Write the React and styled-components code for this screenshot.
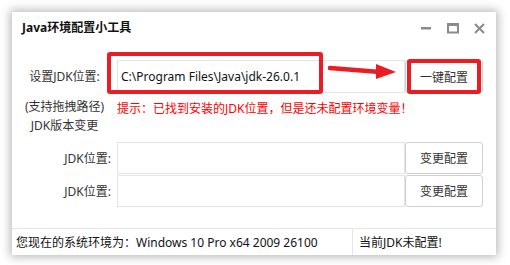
import React from "react";
import styled, { createGlobalStyle } from "styled-components";

const Global = createGlobalStyle`
  html, body { margin: 0; padding: 0; background: #ffffff; }
  body { font-family: "Noto Sans", "Noto Sans CJK SC", sans-serif; font-size: 12px; color: #333; }
  * { box-sizing: border-box; }
`;

const Page = styled.div`
  padding: 12px;
  width: 510px;
  height: 265px;
`;

const Window = styled.div`
  position: relative;
  width: 484px;
  height: 243px;
  background: #fff;
  box-shadow: 0 0 9px 2px rgba(0, 0, 0, 0.28);
  display: flex;
  flex-direction: column;
`;

const TitleBar = styled.div`
  height: 30px;
  display: flex;
  align-items: center;
  justify-content: space-between;
  padding: 0 11px 0 10px;
`;

const Title = styled.div`
  font-weight: bold;
  font-size: 12px;
  color: #111;
`;

const Controls = styled.div`
  display: flex;
  align-items: center;
  gap: 15px;
  padding-top: 2px;
`;

const Content = styled.div`
  flex: 1;
  padding-top: 18px;
  display: flex;
  flex-direction: column;
`;

const MainRow = styled.div`
  display: grid;
  grid-template-columns: 105px 288px 78px;
  height: 33px;
  align-items: stretch;
`;

const SideLabel = styled.div`
  text-align: center;
  line-height: ${(p) => p.$lh || 22}px;
  align-self: center;
  color: #333;
  white-space: nowrap;
`;

const Input = styled.div`
  border: 1px solid #e4e4e4;
  background: #fff;
  display: flex;
  align-items: center;
  padding-left: 3px;
  color: #111;
  white-space: nowrap;
`;

const Button = styled.div`
  border: 1px solid #cfcfcf;
  border-radius: 3px;
  background: #fff;
  display: flex;
  align-items: center;
  justify-content: center;
  color: #333;
`;

const InfoRow = styled.div`
  display: grid;
  grid-template-columns: 105px 1fr;
  height: 22px;
`;

const Hint = styled.div`
  color: #ff0000;
  padding-top: 5px;
  padding-left: 0;
  line-height: 22px;
  white-space: nowrap;
`;

const Rows = styled.div`
  margin-top: 5px;
  display: flex;
  flex-direction: column;
  gap: 1px;
`;

const JdkRow = styled.div`
  display: grid;
  grid-template-columns: 105px 288px 78px;
  height: 32px;
`;

const RightLabel = styled.div`
  text-align: right;
  padding-right: 6px;
  align-self: center;
  color: #333;
`;

const StatusBar = styled.div`
  height: 27px;
  border-top: 1px solid #e6e6e6;
  display: grid;
  grid-template-columns: 340px 1fr;
`;

const StatusCell = styled.div`
  display: flex;
  align-items: center;
  padding-left: ${(p) => p.$pl}px;
  border-left: ${(p) => (p.$divider ? "1px solid #e6e6e6" : "none")};
  color: #111;
  white-space: nowrap;
`;

const Mark = styled.div`
  position: absolute;
  left: ${(p) => p.$x}px;
  top: ${(p) => p.$y}px;
  width: ${(p) => p.$w}px;
  height: ${(p) => p.$h}px;
  border: 4px solid #ea1c24;
  border-radius: 3px;
  pointer-events: none;
`;

const Arrow = styled.svg`
  position: absolute;
  left: 316px;
  top: 50px;
`;

const Minimize = () => (
  <svg width="11" height="12" viewBox="0 0 11 12">
    <rect x="0" y="5" width="10" height="2.5" fill="#8a8a8a" />
  </svg>
);
const Maximize = () => (
  <svg width="12" height="11" viewBox="0 0 12 11">
    <rect x="1" y="1.5" width="10" height="8" fill="none" stroke="#8a8a8a" strokeWidth="2" />
    <rect x="0" y="0" width="12" height="3" fill="#8a8a8a" />
  </svg>
);
const Close = () => (
  <svg width="11" height="11" viewBox="0 0 11 11">
    <path d="M1 1 L10 10 M10 1 L1 10" stroke="#8a8a8a" strokeWidth="2" />
  </svg>
);

export default function App() {
  return (
    <>
      <Global />
      <Page>
        <Window>
          <TitleBar>
            <Title>Java环境配置小工具</Title>
            <Controls>
              <Minimize />
              <Maximize />
              <Close />
            </Controls>
          </TitleBar>
          <Content>
            <MainRow>
              <SideLabel>设置JDK位置:</SideLabel>
              <Input>C:\Program Files\Java\jdk-26.0.1</Input>
              <Button>一键配置</Button>
            </MainRow>
            <InfoRow>
              <SideLabel>(支持拖拽路径)</SideLabel>
              <Hint>提示：已找到安装的JDK位置，但是还未配置环境变量！</Hint>
            </InfoRow>
            <InfoRow>
              <SideLabel>JDK版本变更</SideLabel>
            </InfoRow>
            <Rows>
              <JdkRow>
                <RightLabel>JDK位置:</RightLabel>
                <Input />
                <Button>变更配置</Button>
              </JdkRow>
              <JdkRow>
                <RightLabel>JDK位置:</RightLabel>
                <Input />
                <Button>变更配置</Button>
              </JdkRow>
            </Rows>
          </Content>
          <StatusBar>
            <StatusCell $pl={4}>您现在的系统环境为：Windows 10 Pro x64 2009 26100</StatusCell>
            <StatusCell $pl={6} $divider>当前JDK未配置!</StatusCell>
          </StatusBar>
          <Mark $x={95} $y={40} $w={216} $h={42} />
          <Mark $x={395} $y={47} $w={74} $h={35} />
          <Arrow width="70" height="20" viewBox="0 0 70 20">
            <path d="M2 6 L52 10" stroke="#ea1c24" strokeWidth="4.5" strokeLinecap="round" />
            <path d="M48 2 L68 10 L48 17 Z" fill="#ea1c24" />
          </Arrow>
        </Window>
      </Page>
    </>
  );
}
